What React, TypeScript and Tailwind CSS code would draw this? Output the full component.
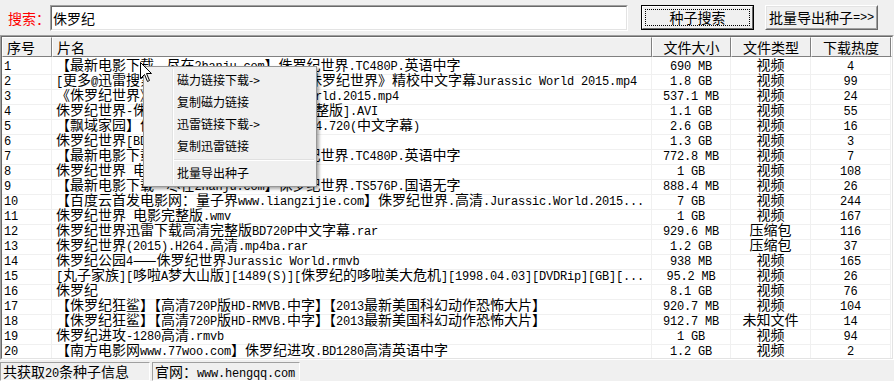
import React from "react"

type Row = [string, string, string, number]

const rows: Row[] = [
  ["【最新电影下载—尽在2hanju.com】侏罗纪世界.TC480P.英语中字", "690 MB", "视频", 4],
  ["[更多@迅雷搜索 www.xunleisou.com ]《侏罗纪世界》精校中文字幕Jurassic World 2015.mp4", "1.8 GB", "视频", 99],
  ["《侏罗纪世界》高清中英双字Jurassic.World.2015.mp4", "537.1 MB", "视频", 24],
  ["侏罗纪世界-侏罗纪公园4[高清中英双字完整版].AVI", "1.1 GB", "视频", 55],
  ["【飘域家园】侏罗纪世界.BD1280高清版.14.720(中文字幕)", "2.6 GB", "视频", 16],
  ["侏罗纪世界[BD-RMVB中字].rmvb", "1.3 GB", "视频", 3],
  ["【最新电影下载—尽在2hanju.com】侏罗纪世界.TC480P.英语中字", "772.8 MB", "视频", 7],
  ["侏罗纪世界 电影版.rmvb", "1 GB", "视频", 108],
  ["【最新电影下载—尽在2hanju.com】侏罗纪世界.TS576P.国语无字", "888.4 MB", "视频", 26],
  ["【百度云首发电影网：量子界www.liangzijie.com】侏罗纪世界.高清.Jurassic.World.2015...", "7 GB", "视频", 244],
  ["侏罗纪世界 电影完整版.wmv", "1 GB", "视频", 167],
  ["侏罗纪世界迅雷下载高清完整版BD720P中文字幕.rar", "929.6 MB", "压缩包", 116],
  ["侏罗纪世界(2015).H264.高清.mp4ba.rar", "1.2 GB", "压缩包", 37],
  ["侏罗纪公园4——侏罗纪世界Jurassic World.rmvb", "938 MB", "视频", 165],
  ["[丸子家族][哆啦A梦大山版][1489(S)][侏罗纪的哆啦美大危机][1998.04.03][DVDRip][GB][...", "95.2 MB", "视频", 26],
  ["侏罗纪", "8.1 GB", "视频", 76],
  ["【侏罗纪狂鲨】【高清720P版HD-RMVB.中字】【2013最新美国科幻动作恐怖大片】", "920.7 MB", "视频", 104],
  ["【侏罗纪狂鲨】【高清720P版HD-RMVB.中字】【2013最新美国科幻动作恐怖大片】", "912.7 MB", "未知文件", 14],
  ["侏罗纪进攻-1280高清.rmvb", "1 GB", "视频", 94],
  ["【南方电影网www.77woo.com】侏罗纪进攻.BD1280高清英语中字", "1.2 GB", "视频", 2],
]

// half-width latin runs get a narrow mono face, like the old SimSun ones
function Txt({ s }: { s: string }) {
  const parts = s.split(/([\x20-\x7e]+)/)
  return (
    <>
      {parts.map((p, i) =>
        i % 2 === 1 ? (
          <span key={i} className="font-['Liberation_Mono',monospace] text-[12px] tracking-[-0.2px]">
            {p}
          </span>
        ) : (
          <React.Fragment key={i}>{p}</React.Fragment>
        )
      )}
    </>
  )
}

const cols = "grid grid-cols-[50px_600px_79px_80px_80px_1fr]"

export default () => {
  return (
    <div className="relative w-[894px] h-[381px] overflow-hidden bg-[#f0f0f0] text-[14px] text-black font-['Noto_Sans_CJK_SC',sans-serif]">
      {/* search bar */}
      <div className="flex items-start h-[35px] pt-[5px] pl-[8px]">
        <span className="w-[42px] h-[26px] leading-[26px] text-[#ff0000]">搜索：</span>
        <div className="w-[578px] h-[26px] border border-t-[#a0a0a0] border-l-[#a0a0a0] border-r-white border-b-white">
          <div className="h-full bg-white border border-t-[#696969] border-l-[#696969] border-r-[#e3e3e3] border-b-[#e3e3e3] pl-[1px] leading-[22px]">
            侏罗纪
          </div>
        </div>
        <button className="ml-[13px] w-[113px] h-[25px] flex border border-black bg-[#f0f0f0]">
          <div className="flex-1 flex border border-t-white border-l-white border-r-[#696969] border-b-[#696969]">
            <div className="flex-1 m-[2px] flex items-center justify-center border border-dotted border-black">
              种子搜索
            </div>
          </div>
        </button>
        <button className="ml-[11px] w-[113px] h-[25px] flex border border-t-white border-l-white border-r-[#696969] border-b-[#696969] bg-[#f0f0f0]">
          <div className="flex-1 flex items-center justify-center border border-t-[#e3e3e3] border-l-[#e3e3e3] border-r-[#a0a0a0] border-b-[#a0a0a0]">
            <Txt s="批量导出种子=>>" />
          </div>
        </button>
      </div>

      {/* list view */}
      <div className="h-[325px] border border-t-[#a0a0a0] border-l-[#a0a0a0] border-r-white border-b-white">
        <div className="h-full bg-white border border-t-[#696969] border-l-[#696969] border-r-[#e3e3e3] border-b-[#e3e3e3] overflow-hidden">
          <div className={`${cols} h-[20px] leading-[18px] bg-[#f0f0f0]`}>
            {["序号", "片名", "文件大小", "文件类型", "下载热度", ""].map((h, i) => (
              <div
                key={i}
                className={`border border-t-white border-l-white border-r-[#808080] border-b-[#808080] whitespace-nowrap overflow-hidden ${
                  i < 2 ? "pl-[4px]" : "text-center"
                }`}
              >
                {h}
              </div>
            ))}
          </div>
          {rows.map((r, i) => (
            <div key={i} className={`${cols} h-[15px] leading-[14px]`}>
              <div className="pl-[2px] border-r border-b border-[#f0f0f0]">
                <Txt s={String(i + 1)} />
              </div>
              <div className="pl-[4px] border-r border-b border-[#f0f0f0] whitespace-nowrap overflow-hidden">
                <Txt s={r[0]} />
              </div>
              <div className="text-center border-r border-b border-[#f0f0f0] whitespace-nowrap">
                <Txt s={r[1]} />
              </div>
              <div className="text-center border-r border-b border-[#f0f0f0] whitespace-nowrap">{r[2]}</div>
              <div className="text-center border-r border-b border-[#f0f0f0]">
                <Txt s={String(r[3])} />
              </div>
              <div />
            </div>
          ))}
        </div>
      </div>

      {/* status bar */}
      <div className="flex gap-[2px] mt-[2px] h-[19px]">
        <div className="w-[150px] pl-[2px] leading-[17px] border border-t-[#a0a0a0] border-l-[#a0a0a0] border-r-white border-b-white">
          <Txt s="共获取20条种子信息" />
        </div>
        <div className="w-[148px] pl-[2px] leading-[17px] border border-t-[#a0a0a0] border-l-[#a0a0a0] border-r-white border-b-white whitespace-nowrap">
          <Txt s="官网：www.hengqq.com" />
        </div>
      </div>

      {/* context menu */}
      <div className="absolute left-[143px] top-[66px] w-[174px] h-[121px] bg-[#f0f0f0] border border-[#979797] shadow-[2px_2px_3px_rgba(0,0,0,0.35)] py-[2px] pl-[2px] pr-[2px] text-[12px] font-['Noto_Sans_CJK_SC',sans-serif]">
        <div className="flex h-full">
          <div className="w-[27px] shrink-0 border-r border-r-[#e2e3e3]" />
          <div className="flex-1 border-l border-l-white flex flex-col">
            {["磁力链接下载->", "复制磁力链接", "迅雷链接下载->", "复制迅雷链接"].map((t) => (
              <div key={t} className="h-[22px] leading-[22px] pl-[3px]">
                {t}
              </div>
            ))}
            <div className="h-[7px] flex flex-col justify-center">
              <div className="border-t border-t-[#e0e0e0] border-b border-b-white" />
            </div>
            <div className="h-[22px] leading-[22px] pl-[3px]">批量导出种子</div>
          </div>
        </div>
      </div>

      {/* mouse pointer */}
      <svg className="absolute left-[140px] top-[62px]" width="13" height="21" viewBox="0 0 13 21">
        <path d="M0.5 0.5 L0.5 16.5 L4.5 12.5 L7.5 19.5 L9.5 18.5 L6.5 11.5 L11.5 11.5 Z" fill="white" stroke="black" strokeWidth="1" />
      </svg>
    </div>
  )
}
